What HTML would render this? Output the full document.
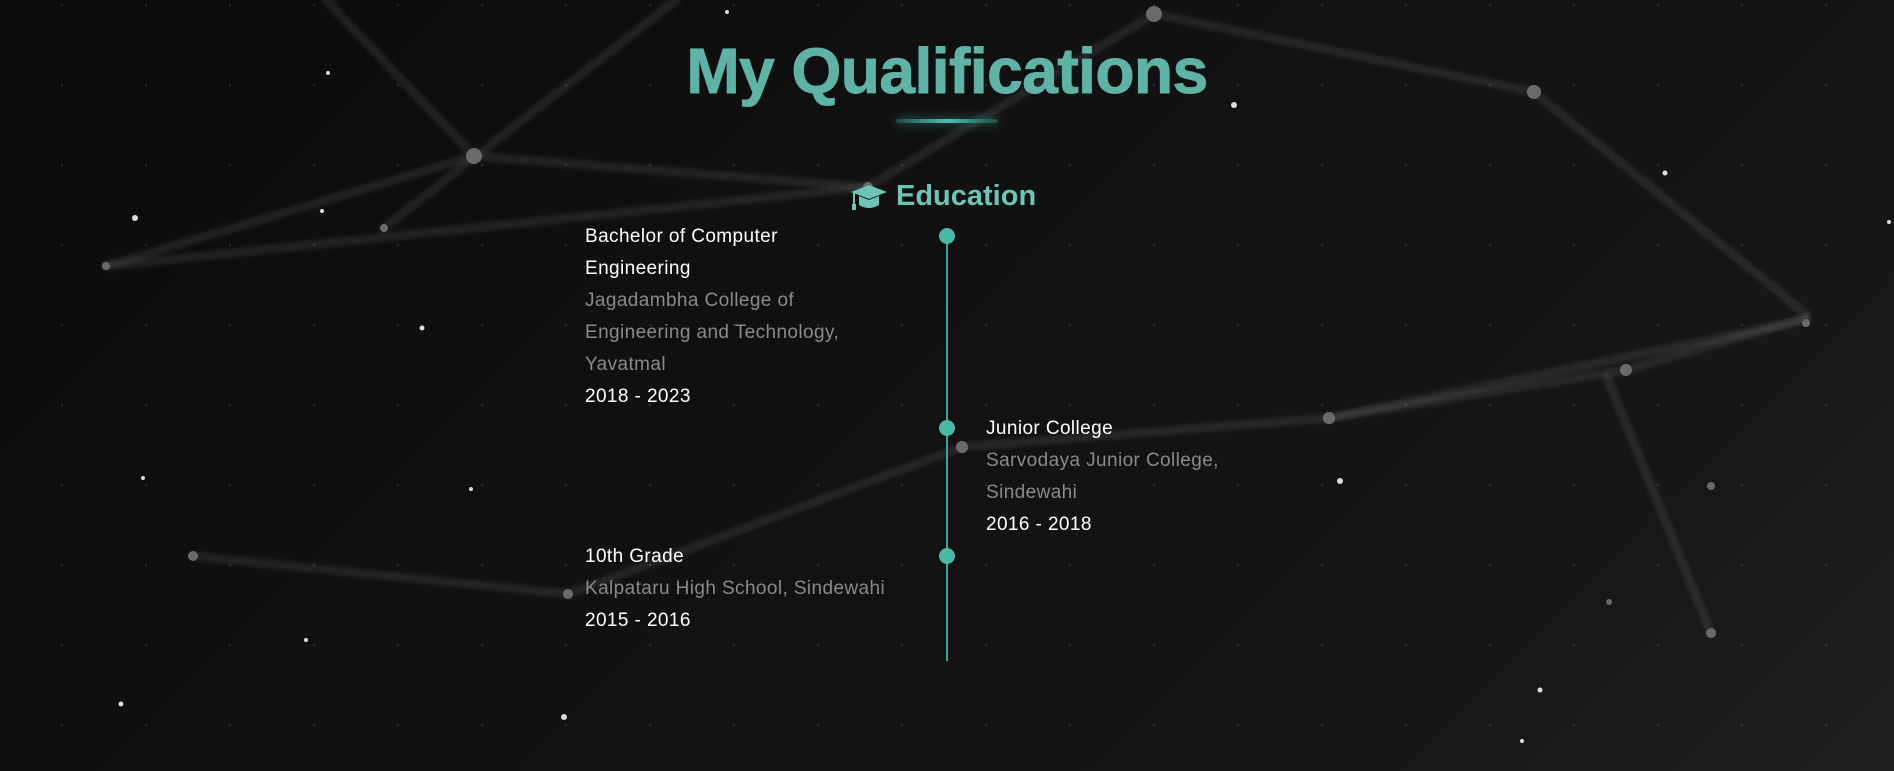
<!DOCTYPE html>
<html><head><meta charset="utf-8"><style>
html,body{margin:0;padding:0}
body{width:1894px;height:771px;overflow:hidden;position:relative;background:linear-gradient(135deg,#0b0b0b 0%,#111 45%,#161616 80%,#1f1f1f 100%);font-family:"Liberation Sans",sans-serif}
.grid{position:absolute;inset:0;background-image:radial-gradient(circle,rgba(255,255,255,0.12) 1px,transparent 1.5px);background-size:84px 80px;background-position:20px 45px}
svg.bg{position:absolute;left:0;top:0}
h1{position:absolute;left:0;width:1894px;top:34px;margin:0;text-align:center;font-size:64px;font-weight:700;color:#5fb3a6;letter-spacing:-0.5px;-webkit-text-stroke:1px #5fb3a6}
.bar{position:absolute;left:896px;top:119px;width:102px;height:4px;border-radius:2px;background:linear-gradient(90deg,#1e4a45,#4fc1b2,#1e4a45);box-shadow:0 0 10px rgba(79,193,178,0.6)}
.edu{position:absolute;left:850px;top:180px;font-size:29px;font-weight:700;color:#6ec4b7;display:flex;align-items:center;gap:8px}
.line{position:absolute;left:946px;top:236px;width:2px;height:425px;background:#3fa598}
.dot{position:absolute;left:939px;width:16px;height:16px;border-radius:50%;background:#4bb9aa}
.t{position:absolute;font-size:19px;line-height:32px;color:#fff;letter-spacing:0.4px}
.g{color:#8a8a8a}
</style></head><body>
<div class="grid"></div>
<svg class="bg" width="1894" height="771" viewBox="0 0 1894 771">
<defs><filter id="b"><feGaussianBlur stdDeviation="1.5"/></filter></defs>
<g stroke="rgba(255,255,255,0.08)" stroke-width="9" stroke-linecap="round" fill="none" filter="url(#b)">
<line x1="106" y1="266" x2="474" y2="156"/>
<line x1="106" y1="266" x2="868" y2="187"/>
<line x1="474" y1="156" x2="868" y2="187"/>
<line x1="384" y1="228" x2="676" y2="0"/>
<line x1="326" y1="0" x2="474" y2="156"/>
<line x1="868" y1="187" x2="1154" y2="14"/>
<line x1="1154" y1="14" x2="1534" y2="92"/>
<line x1="1534" y1="92" x2="1806" y2="314"/>
<line x1="1806" y1="320" x2="1329" y2="418"/>
<line x1="1329" y1="418" x2="1626" y2="370"/>
<line x1="1626" y1="370" x2="1806" y2="318"/>
<line x1="1607" y1="377" x2="1711" y2="633"/>
<line x1="962" y1="447" x2="1329" y2="418"/>
<line x1="568" y1="594" x2="962" y2="447"/>
<line x1="193" y1="556" x2="568" y2="594"/>
</g>
<g fill="#6a6a6a">
<circle cx="106" cy="266" r="4"/><circle cx="474" cy="156" r="8"/><circle cx="384" cy="228" r="4"/>
<circle cx="868" cy="187" r="5"/><circle cx="1154" cy="14" r="8"/><circle cx="1534" cy="92" r="7"/>
<circle cx="1806" cy="323" r="4"/><circle cx="1329" cy="418" r="6"/><circle cx="1626" cy="370" r="6"/>
<circle cx="1711" cy="633" r="5"/><circle cx="962" cy="447" r="6"/><circle cx="568" cy="594" r="5"/>
<circle cx="193" cy="556" r="5"/><circle cx="1711" cy="486" r="4"/><circle cx="1609" cy="602" r="3"/>
</g>
<g fill="#ddd">
<circle cx="135" cy="218" r="3"/><circle cx="727" cy="12" r="2"/><circle cx="328" cy="73" r="2"/>
<circle cx="1234" cy="105" r="3"/><circle cx="1665" cy="173" r="2.5"/><circle cx="1340" cy="481" r="3"/>
<circle cx="422" cy="328" r="2.5"/><circle cx="471" cy="489" r="2"/><circle cx="143" cy="478" r="2"/>
<circle cx="121" cy="704" r="2.5"/><circle cx="564" cy="717" r="3"/><circle cx="1540" cy="690" r="2.5"/>
<circle cx="1889" cy="222" r="2"/><circle cx="322" cy="211" r="2"/><circle cx="306" cy="640" r="2"/>
<circle cx="1522" cy="741" r="2"/>
</g>
</svg>
<h1>My Qualifications</h1>
<div class="bar"></div>
<div class="edu"><svg width="38" height="28" viewBox="0 0 38 28"><path d="M19 2 L37 9 L19 16 L1 9 Z" fill="#6ec4b7"/><path d="M9 13 V22 Q19 28 29 22 V13 L19 17 Z" fill="#6ec4b7"/><path d="M4 10 V22" stroke="#6ec4b7" stroke-width="2"/><rect x="2" y="21" width="4" height="6" fill="#6ec4b7"/></svg>Education</div>
<div class="line"></div>
<div class="dot" style="top:228px"></div>
<div class="dot" style="top:420px"></div>
<div class="dot" style="top:548px"></div>
<div class="t" style="left:585px;top:221px">Bachelor of Computer<br>Engineering<br><span class="g">Jagadambha College of<br>Engineering and Technology,<br>Yavatmal</span><br>2018 - 2023</div>
<div class="t" style="left:986px;top:413px">Junior College<br><span class="g">Sarvodaya Junior College,<br>Sindewahi</span><br>2016 - 2018</div>
<div class="t" style="left:585px;top:541px">10th Grade<br><span class="g">Kalpataru High School, Sindewahi</span><br>2015 - 2016</div>
</body></html>
